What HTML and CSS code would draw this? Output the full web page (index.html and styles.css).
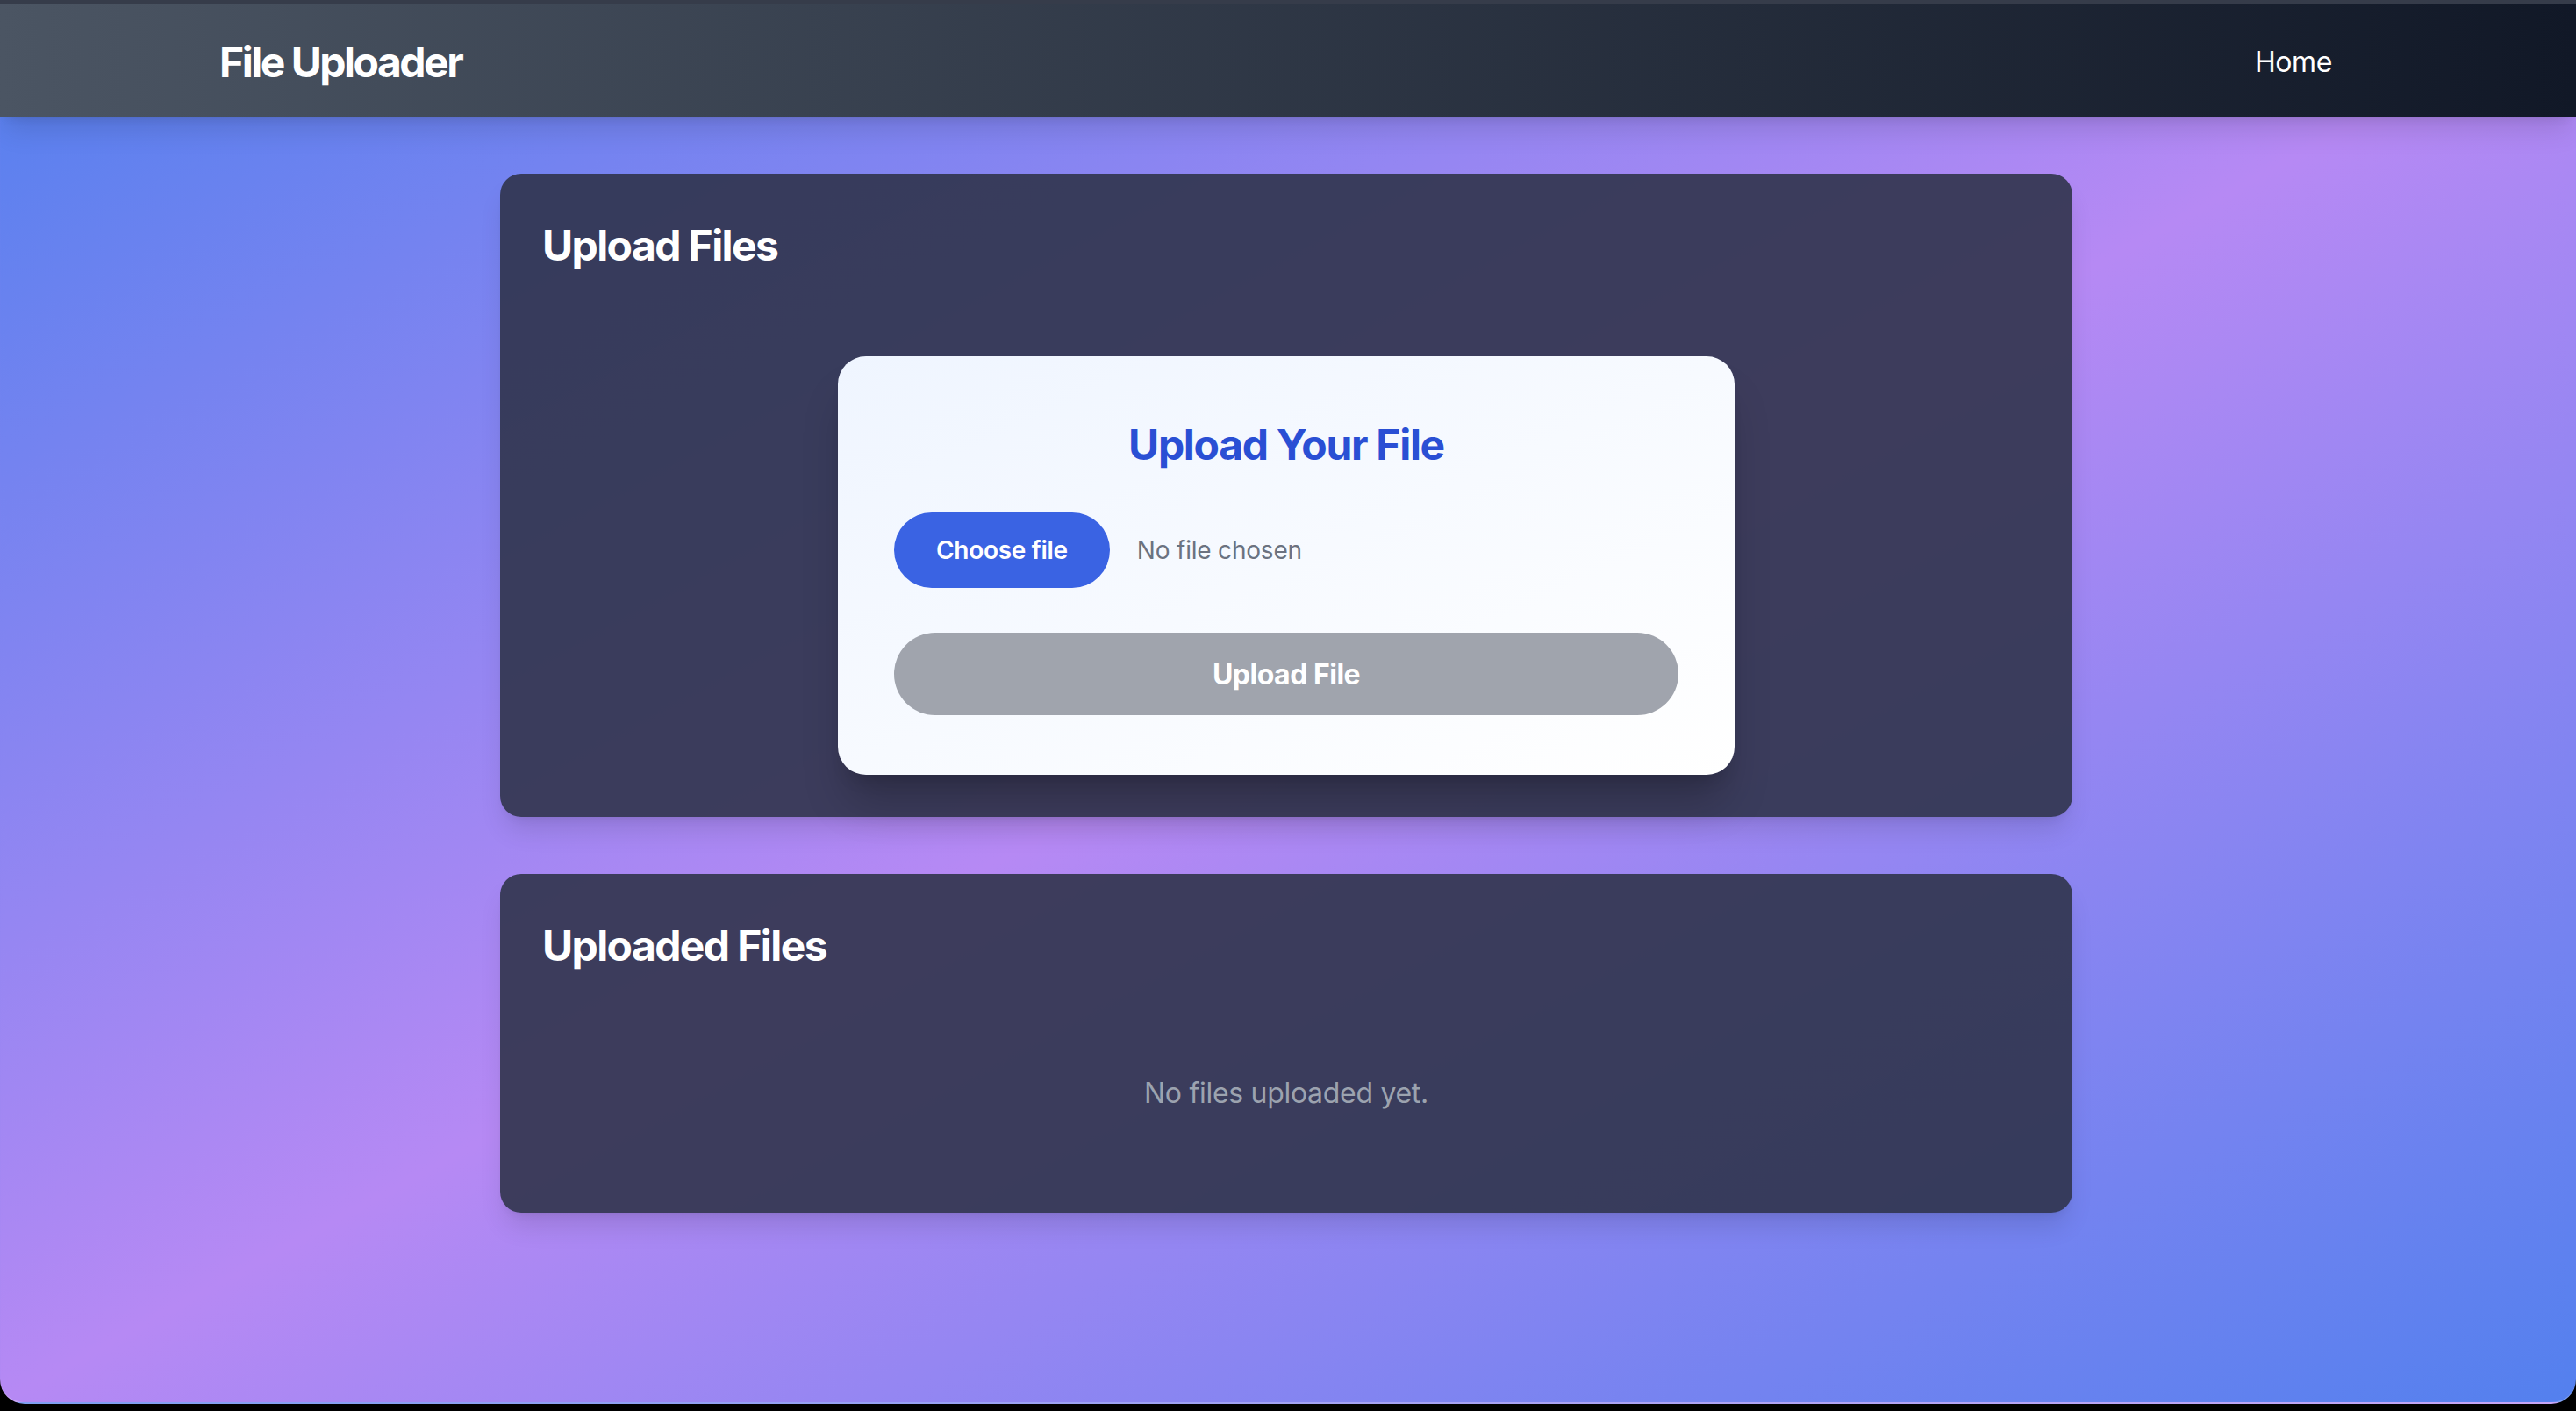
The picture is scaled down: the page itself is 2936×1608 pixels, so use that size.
FILE: index.html
```html
<!DOCTYPE html>
<html lang="en">
<head>
<meta charset="utf-8">
<title>File Uploader</title>
<link rel="stylesheet" href="styles.css">
</head>
<body>
<div class="window">
  <header class="navbar">
    <div class="nav-inner">
      <a class="brand" href="#">File Uploader</a>
      <a class="nav-link" href="#">Home</a>
    </div>
  </header>
  <main class="main">
    <section class="card">
      <h2 class="card-title">Upload Files</h2>
      <div class="upload-wrap">
        <div class="upload-box">
          <h3 class="upload-title">Upload Your File</h3>
          <div class="file-row">
            <button class="choose-btn" type="button">Choose file</button>
            <span class="file-status">No file chosen</span>
          </div>
          <button class="upload-btn" type="button" disabled>Upload File</button>
        </div>
      </div>
    </section>
    <section class="card">
      <h2 class="card-title">Uploaded Files</h2>
      <p class="empty">No files uploaded yet.</p>
    </section>
  </main>
</div>
</body>
</html>
```

FILE: styles.css
```css
* { box-sizing: border-box; }

html, body {
  margin: 0;
  padding: 0;
  height: 1608px;
  overflow: hidden;
  background: #000;
  font-family: "Inter", "Noto Sans", "Liberation Sans", sans-serif;
}

.window {
  height: 1600px;
  border-top: 5px solid #363c4a;
  border-radius: 0 0 28px 28px;
  overflow: hidden;
  background: linear-gradient(to bottom right, #5380ee 0%, #b689f4 50%, #5380ee 100%);
  border-bottom: 2px solid rgba(255, 255, 255, 0.25);
}

.navbar {
  height: 128px;
  background: linear-gradient(to right, #4b5563, #111827);
  box-shadow: 0 20px 30px -6px rgba(0, 0, 0, 0.12), 0 8px 12px -8px rgba(0, 0, 0, 0.12);
  position: relative;
  z-index: 1;
}

.nav-inner {
  width: 2560px;
  margin: 0 auto;
  padding: 0 66px 0 62px;
  height: 100%;
  display: flex;
  align-items: center;
  justify-content: space-between;
}

.brand {
  color: #fff;
  text-decoration: none;
  font-size: 48px;
  font-weight: 700;
  letter-spacing: -2.5px;
  padding-top: 2px;
}

.nav-link {
  color: #fff;
  text-decoration: none;
  font-size: 32px;
  font-weight: 400;
  padding: 18px 24px 16px;
  letter-spacing: -0.4px;
}

.main {
  width: 1792px;
  margin: 0 auto;
  padding-top: 65px;
  display: flex;
  flex-direction: column;
  gap: 65px;
  position: relative;
  left: -2px;
}

.card {
  background: rgba(46, 51, 73, 0.89);
  border-radius: 24px;
  padding: 48px;
  box-shadow: 0 20px 30px -6px rgba(0, 0, 0, 0.12), 0 8px 12px -8px rgba(0, 0, 0, 0.1);
}

.card-title {
  margin: 0 0 48px;
  padding-top: 2px;
  color: #fff;
  font-size: 48px;
  line-height: 64px;
  font-weight: 700;
  letter-spacing: -1.6px;
}

.upload-wrap {
  display: flex;
  justify-content: center;
  padding-top: 46px;
}

.upload-box {
  width: 1022px;
  padding: 64px 64px 68px;
  border-radius: 32px;
  background: linear-gradient(to bottom right, #eff5ff, #ffffff);
  box-shadow: 0 40px 50px -10px rgba(0, 0, 0, 0.22), 0 16px 20px -12px rgba(0, 0, 0, 0.15);
}

.upload-title {
  margin: 0 0 45px;
  padding-top: 5px;
  text-align: center;
  color: #2a4fd4;
  font-size: 48px;
  line-height: 64px;
  font-weight: 700;
  letter-spacing: -1.3px;
}

.file-row {
  display: flex;
  align-items: center;
  gap: 31px;
  margin-bottom: 51px;
}

.choose-btn {
  height: 86px;
  padding: 0 48px;
  border: 0;
  border-radius: 999px;
  background: #3a63e3;
  color: #fff;
  font-family: inherit;
  font-size: 28px;
  font-weight: 600;
  letter-spacing: -0.3px;
}

.file-status {
  color: #6b7280;
  font-size: 28px;
  letter-spacing: -0.2px;
}

.upload-btn {
  display: block;
  width: 100%;
  height: 94px;
  border: 0;
  border-radius: 999px;
  background: #a0a4ad;
  color: #fff;
  font-family: inherit;
  font-size: 32px;
  font-weight: 700;
  letter-spacing: -0.5px;
}

.empty {
  margin: 0;
  padding: 64px 0;
  text-align: center;
  color: #9ca3af;
  font-size: 32px;
  line-height: 48px;
  letter-spacing: -0.3px;
}
```
